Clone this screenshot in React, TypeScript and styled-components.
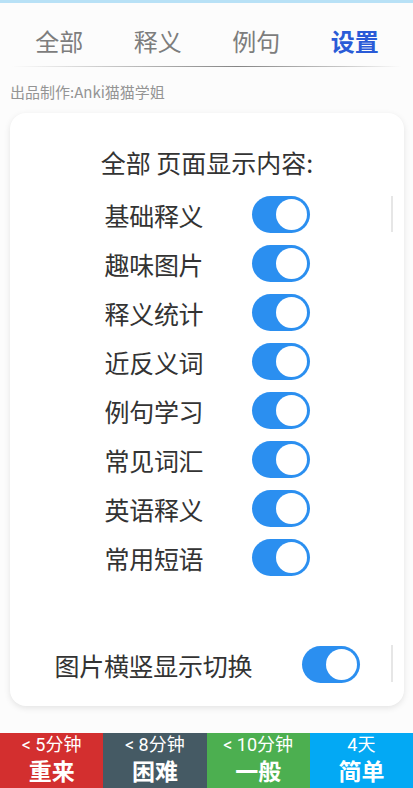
import styled, { createGlobalStyle } from "styled-components"

const GlobalStyle = createGlobalStyle`
  body {
    margin: 0;
    background: #fcfcfc;
    font-family: "Noto Sans CJK SC", "Noto Sans", Roboto, sans-serif;
  }
`

const Page = styled.div`
  width: 413px;
  height: 788px;
  display: flex;
  flex-direction: column;
  overflow: hidden;
`

const TopStrip = styled.div`
  height: 3px;
  background: #b8e1f6;
`

const Tabs = styled.div`
  display: grid;
  grid-template-columns: repeat(4, 1fr);
  margin: 0 9px 0 10px;
  padding: 20px 0 7px;
`

const Tab = styled.div<{ $active?: boolean }>`
  text-align: center;
  font-size: 24px;
  line-height: 36px;
  color: ${p => (p.$active ? "#2a5bd7" : "#7d7d7d")};
  font-weight: ${p => (p.$active ? 700 : 400)};
`

const TabLine = styled.div`
  height: 1px;
  margin: 0 12px;
  background: linear-gradient(90deg, rgba(0,0,0,0) 0%, #c8c8c8 25%, #858585 58%, #c8c8c8 85%, rgba(0,0,0,0) 100%);
`

const Credit = styled.div`
  margin: 15px 0 0 10px;
  font-size: 15px;
  line-height: 20px;
  color: #949494;
`

const Card = styled.div`
  position: relative;
  margin: 11px 9px 0 10px;
  padding: 32px 0 17px;
  background: #fff;
  border-radius: 16px;
  box-shadow: 0 2px 6px rgba(0, 0, 0, 0.1);
`

const Title = styled.div`
  text-align: center;
  font-size: 25px;
  line-height: 34px;
  color: #333;
`

const List = styled.div`
  position: relative;
  margin-top: 11px;
`

const Thumb = styled.div<{ $top: number; $height: number }>`
  position: absolute;
  right: 11px;
  top: ${p => p.$top}px;
  width: 2px;
  height: ${p => p.$height}px;
  background: #e6e6e6;
`

const Row = styled.div<{ $width: number }>`
  width: ${p => p.$width}px;
  height: 49px;
  margin: 0 auto;
  display: flex;
  align-items: center;
  justify-content: space-between;
`

const Label = styled.span`
  font-size: 25px;
  color: #333;
  letter-spacing: -0.3px;
`

const Toggle = styled.div`
  position: relative;
  width: 58px;
  height: 37px;
  border-radius: 19px;
  background: #2b8ff0;
  flex-shrink: 0;
`

const Knob = styled.div`
  position: absolute;
  right: 3px;
  top: 3px;
  width: 31px;
  height: 31px;
  border-radius: 50%;
  background: #fff;
`

const Spacer = styled.div`
  height: 58px;
`

const LastRow = styled.div`
  position: relative;
`

const BottomBar = styled.div`
  margin-top: auto;
  display: grid;
  grid-template-columns: repeat(4, 1fr);
  height: 55px;
`

const Answer = styled.div<{ $bg: string }>`
  background: ${p => p.$bg};
  color: #fff;
  display: flex;
  flex-direction: column;
  align-items: center;
  padding-top: 2px;
`

const Due = styled.span`
  font-family: Roboto, "Noto Sans CJK SC", sans-serif;
  font-size: 18px;
  line-height: 20px;
`

const Ease = styled.span`
  font-size: 23px;
  line-height: 24px;
  font-weight: 700;
  margin-top: 3px;
`

const items = ["基础释义", "趣味图片", "释义统计", "近反义词", "例句学习", "常见词汇", "英语释义", "常用短语"]

const answers = [
  { due: "< 5分钟", ease: "重来", bg: "#d32f2f" },
  { due: "< 8分钟", ease: "困难", bg: "#455a64" },
  { due: "< 10分钟", ease: "一般", bg: "#4caf50" },
  { due: "4天", ease: "简单", bg: "#03a9f4" },
]

const Switch = () => (
  <Toggle>
    <Knob />
  </Toggle>
)

const App = () => {
  return (
    <Page>
      <GlobalStyle />
      <TopStrip />
      <Tabs>
        <Tab>全部</Tab>
        <Tab>释义</Tab>
        <Tab>例句</Tab>
        <Tab $active>设置</Tab>
      </Tabs>
      <TabLine />
      <Credit>出品制作:Anki猫猫学姐</Credit>
      <Card>
        <Title>全部 页面显示内容:</Title>
        <List>
          <Thumb $top={6} $height={36} />
          {items.map(item => (
            <Row $width={205} key={item}>
              <Label>{item}</Label>
              <Switch />
            </Row>
          ))}
        </List>
        <Spacer />
        <LastRow>
          <Thumb $top={5} $height={37} />
          <Row $width={305}>
            <Label>图片横竖显示切换</Label>
            <Switch />
          </Row>
        </LastRow>
      </Card>
      <BottomBar>
        {answers.map(a => (
          <Answer $bg={a.bg} key={a.ease}>
            <Due>{a.due}</Due>
            <Ease>{a.ease}</Ease>
          </Answer>
        ))}
      </BottomBar>
    </Page>
  )
}

export default App
